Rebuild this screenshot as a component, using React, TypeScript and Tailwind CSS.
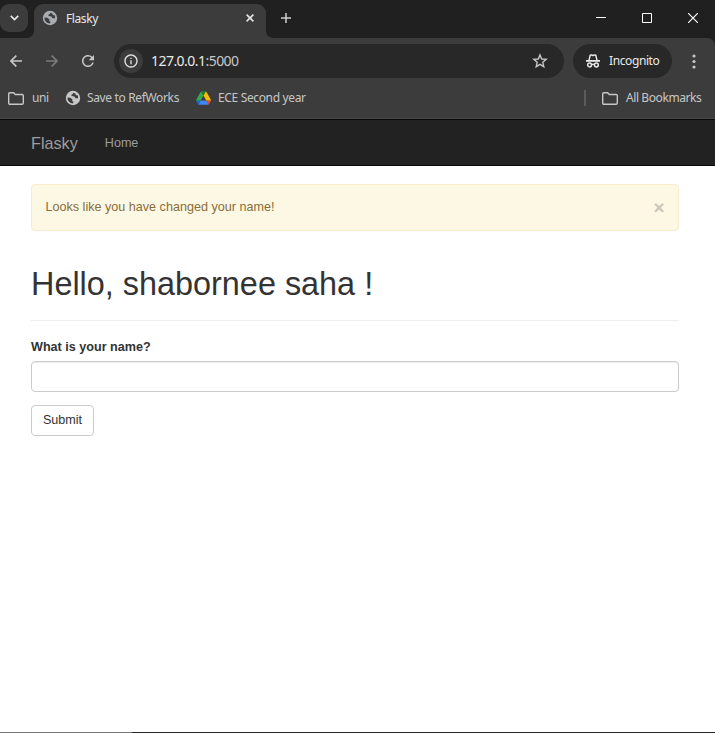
import React from "react";
import { MdRefresh, MdInfoOutline } from "react-icons/md";

function Globe({ className }: { className: string }) {
  return (
    <svg className={className} viewBox="0 0 16 16">
      <circle cx="8" cy="8" r="7.2" fill="currentColor" />
      <path d="M8.4 2.8 7.8 4.1 6.3 4.7 6.6 5.9 9.4 6.4 10.5 8.2 13.1 8.3Q13.5 6.6 12.3 4.9L11 5.2 10.3 3.5Z" fill="#3c3c3c" />
      <path d="M2.5 7.4 5.3 7.8 7.6 9.5 7 11.2 8.8 11.8 7.8 13.4Q4.8 13.3 3.2 10.7 2.3 9 2.5 7.4Z" fill="#3c3c3c" />
    </svg>
  );
}

function Arrow({ className }: { className: string }) {
  return (
    <svg className={className} viewBox="0 0 12 12" fill="none" stroke="currentColor" strokeWidth="1.6">
      <path d="M12 6H1M6.3 .6 .9 6 6.3 11.4" />
    </svg>
  );
}

function Star() {
  return (
    <svg className="ml-auto mr-4 h-4 w-4" viewBox="0 0 16 16" fill="none" stroke="#c7c7c7" strokeWidth="1.4">
      <path d="M8 1.9 9.7 6 14.2 6.4 10.8 9.3 11.8 13.7 8 11.4 4.2 13.7 5.2 9.3 1.8 6.4 6.3 6Z" />
    </svg>
  );
}

function Folder() {
  return (
    <svg className="h-[13px] w-4 shrink-0" viewBox="0 0 16 13" fill="none" stroke="#c7c7c7" strokeWidth="1.4">
      <path d="M0.7 1.9Q0.7 0.7 1.9 0.7H5.6L7.3 2.5H14Q15.3 2.5 15.3 3.7V11Q15.3 12.2 14 12.2H1.9Q0.7 12.2 0.7 11Z" />
    </svg>
  );
}

function Drive() {
  return (
    <svg className="h-[14px] w-[15px] shrink-0" viewBox="0 0 87.3 78">
      <path d="M6.6 66.85 10.45 73.5c.8 1.4 1.95 2.5 3.3 3.3L27.5 53H0c0 1.55.4 3.1 1.2 4.5z" fill="#1967d2" />
      <path d="M43.65 25 29.9 1.2c-1.35.8-2.5 1.9-3.3 3.3L1.2 48.5A9 9 0 0 0 0 53h27.5z" fill="#34a853" />
      <path d="M73.55 76.8c1.35-.8 2.5-1.9 3.3-3.3l8.25-14.3c1.5-2.6 2.2-4.5 2.2-6.2H59.8z" fill="#ea4335" />
      <path d="M43.65 25 57.4 1.2C56.05.4 54.5 0 52.9 0H34.4c-1.6 0-3.15.45-4.5 1.2z" fill="#188038" />
      <path d="M59.8 53H27.5L13.75 76.8c1.35.8 2.9 1.2 4.5 1.2h50.8c1.6 0 3.15-.45 4.5-1.2z" fill="#4285f4" />
      <path d="M73.4 26.5 60.7 4.5c-.8-1.4-1.95-2.5-3.3-3.3L43.65 25 59.8 53h27.45c0-1.55-.4-3.1-1.2-4.5z" fill="#fbbc04" />
    </svg>
  );
}

function IncognitoIcon() {
  return (
    <svg className="h-[14px] w-4 shrink-0" viewBox="0 0 16 14" fill="none" stroke="#e8e8e8" strokeWidth="1.5">
      <path d="M1 6.9H15" strokeWidth="1.8" />
      <path d="M4 6.3 5.2 1.2Q6.4 .6 8 1.5Q9.6 .6 10.8 1.2L12 6.3" />
      <circle cx="4.6" cy="11" r="1.9" />
      <circle cx="11.4" cy="11" r="1.9" />
      <path d="M6.4 10.7Q8 9.9 9.6 10.7" />
    </svg>
  );
}

function TabStrip() {
  return (
    <div className="flex h-[38px] bg-[#202020]">
      <div className="flex w-[34px] items-start">
        <div className="mt-1 flex h-7 w-7 items-center justify-center rounded-[9px] bg-[#3c3c3c]">
          <svg className="h-[6px] w-[9px]" viewBox="0 0 9 6" fill="none" stroke="#e8e8e8" strokeWidth="1.7"><path d="M.8 .8 4.5 4.5 8.2 .8" /></svg>
        </div>
      </div>
      <div className="relative mt-1 flex w-[232px] items-start rounded-t-[9px] bg-[#3c3c3c]">
        <svg className="absolute -left-2 bottom-0 h-2 w-2" viewBox="0 0 8 8"><path d="M8 0Q8 8 0 8H8Z" fill="#3c3c3c" /></svg>
        <svg className="absolute -right-2 bottom-0 h-2 w-2" viewBox="0 0 8 8"><path d="M0 0Q0 8 8 8H0Z" fill="#3c3c3c" /></svg>
        <div className="flex h-7 w-full items-center pl-2">
          <Globe className="h-4 w-4 text-[#a9adb1]" />
          <span className="ml-2 pt-px text-[12px] leading-4 tracking-[-0.4px] text-[#e8e8e8]">Flasky</span>
          <svg className="ml-auto mr-3 h-2 w-2" viewBox="0 0 8 8" stroke="#e3e3e3" strokeWidth="1.6"><path d="M.6 .6 7.4 7.4M7.4 .6 .6 7.4" /></svg>
        </div>
      </div>
      <svg className="ml-[15px] mt-[13px] h-[10px] w-[10px]" viewBox="0 0 10 10" stroke="#d0d0d0" strokeWidth="1.5"><path d="M5 0V10M0 5H10" /></svg>
      <div className="ml-auto mr-[17px] flex h-9 items-center gap-9">
        <svg className="h-[10px] w-[10px]" viewBox="0 0 10 10" stroke="#fff"><path d="M0 4.5H10" /></svg>
        <svg className="h-[10px] w-[10px]" viewBox="0 0 10 10" stroke="#fff" fill="none"><path d="M.5 .5H9.5V9.5H.5Z" /></svg>
        <svg className="h-[10px] w-[10px]" viewBox="0 0 10 10" stroke="#fff" strokeWidth="1.2"><path d="M0 0 10 10M10 0 0 10" /></svg>
      </div>
    </div>
  );
}

function Toolbar() {
  return (
    <div className="bg-[#202020]">
      <div className="flex h-[46px] items-center rounded-tr-[8px] bg-[#3c3c3c] pl-[10px]">
        <Arrow className="h-3 w-3 text-[#c7c7c7]" />
        <Arrow className="ml-6 h-3 w-3 rotate-180 text-[#7b7b7b]" />
        <MdRefresh className="ml-[21px] h-[18px] w-[18px] text-[#c7c7c7]" />
        <div className="ml-[17px] flex h-[34px] w-[450px] items-center rounded-full bg-[#282828] pl-[5px]">
          <div className="flex h-6 w-6 items-center justify-center rounded-full bg-[#3c3c3c]">
            <MdInfoOutline className="h-4 w-4 text-[#e3e3e3]" />
          </div>
          <span className="ml-2 text-[14px] leading-5 tracking-[-0.54px] text-[#c7c7c7]"><span className="text-[#e8e8e8]">127.0.0.1</span>:5000</span>
          <Star />
        </div>
        <div className="ml-[9px] flex h-[34px] w-[99px] items-center rounded-full bg-[#282828] pl-3">
          <IncognitoIcon />
          <span className="ml-2 text-[12px] leading-4 tracking-[-0.4px] text-[#e8e8e8]">Incognito</span>
        </div>
        <svg className="ml-5 h-[15px] w-1" viewBox="0 0 4 15" fill="#c7c7c7"><circle cx="2" cy="2" r="1.6" /><circle cx="2" cy="7.5" r="1.6" /><circle cx="2" cy="13" r="1.6" /></svg>
      </div>
    </div>
  );
}

function Bookmarks() {
  return (
    <div className="flex h-[35px] items-center border-b border-[#484848] bg-[#3c3c3c] pb-[6px] pl-2 text-[12px] leading-4 text-[#c7c7c7]">
      <Folder />
      <span className="ml-2 w-[17px] whitespace-nowrap tracking-[-0.4px]">uni</span>
      <Globe className="ml-4 h-4 w-4 shrink-0" />
      <span className="ml-[6px] w-[93px] whitespace-nowrap tracking-[-0.35px]">Save to RefWorks</span>
      <div className="ml-[16px] flex"><Drive /></div>
      <span className="ml-[7px] whitespace-nowrap tracking-[-0.35px]">ECE Second year</span>
      <div className="ml-auto mr-4 h-4 w-[2px] bg-[#5b5b5b]" />
      <Folder />
      <span className="ml-2 mr-[13px] w-[76px] whitespace-nowrap tracking-[-0.41px]">All Bookmarks</span>
    </div>
  );
}

export default function App() {
  return (
    <div className="flex h-[733px] w-[715px] flex-col overflow-hidden bg-white font-['Liberation_Sans',Arial,sans-serif] text-[12.6px] leading-[18px] text-[#333]">
      <header className="font-['Noto_Sans',sans-serif]">
        <TabStrip />
        <Toolbar />
        <Bookmarks />
      </header>
      <nav className="flex h-[47px] shrink-0 items-center border-y border-[#080808] bg-[#222] pl-[31px] text-[#9d9d9d]">
        <a className="text-[16.2px]">Flasky</a>
        <a className="ml-[27px]">Home</a>
      </nav>
      <main className="flex grow flex-col items-start pl-[31px] pr-9 pt-[18px]">
        <div className="flex h-[47px] w-full items-center rounded-[4px] border border-[#faebcc] bg-[#fcf8e3] pl-[13.5px] pr-[13.5px] text-[#8a6d3b]">
          <span className="pb-[2px]">Looks like you have changed your name!</span>
          <button className="ml-auto text-[18.9px] font-bold leading-[18px] text-[#cac6b6]">×</button>
        </div>
        <div className="mt-[35px] h-[55px] w-full border-b border-[#eee]">
          <h1 className="text-[32.4px] leading-[36px]">Hello, shabornee saha !</h1>
        </div>
        <label className="mt-[17px] font-bold">What is your name?</label>
        <input className="mt-[5px] h-[31px] w-full rounded-[4px] border border-[#ccc] px-3 shadow-[inset_0_1px_1px_rgba(0,0,0,0.075)] outline-none" />
        <button className="mt-[13px] h-[31px] w-[63px] rounded-[4px] border border-[#ccc] pb-[2px]">Submit</button>
      </main>
      <footer className="flex h-px shrink-0 bg-[#252525]"><div className="w-[132px] bg-[#777]" /></footer>
    </div>
  );
}
